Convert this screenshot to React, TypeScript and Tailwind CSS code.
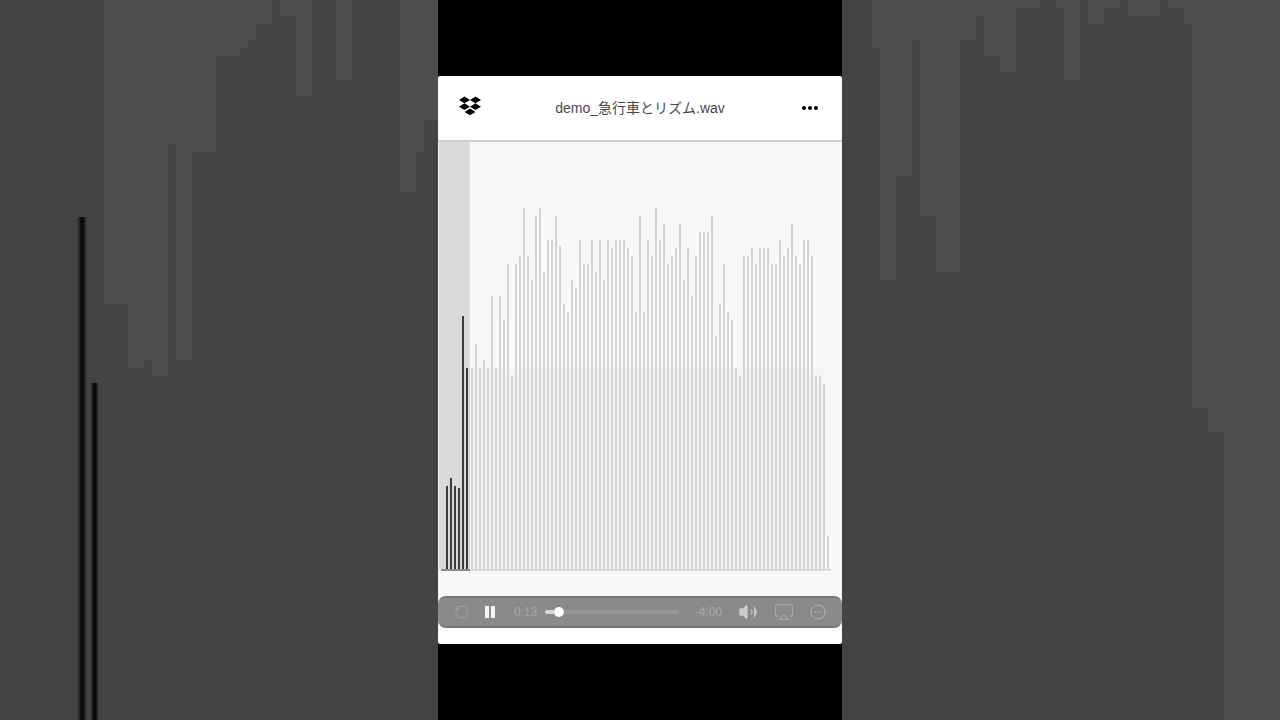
import { useState } from "react"
import { Airplay, RotateCcw, Volume2 } from "lucide-react"

interface Column { x: number; w: number; h: number }

// Enlarged waveform silhouette on both sides of the player
const backdropColumns: Column[] = [
  { x: 104, w: 24, h: 304 }, { x: 128, w: 16, h: 368 }, { x: 144, w: 8, h: 360 }, { x: 152, w: 16, h: 376 },
  { x: 168, w: 8, h: 144 }, { x: 176, w: 16, h: 360 }, { x: 192, w: 24, h: 152 }, { x: 216, w: 24, h: 56 },
  { x: 240, w: 8, h: 48 }, { x: 248, w: 8, h: 40 }, { x: 256, w: 16, h: 24 }, { x: 280, w: 16, h: 16 },
  { x: 296, w: 16, h: 96 }, { x: 336, w: 16, h: 80 }, { x: 400, w: 16, h: 192 }, { x: 416, w: 8, h: 152 },
  { x: 424, w: 14, h: 120 }, { x: 872, w: 8, h: 48 }, { x: 880, w: 16, h: 280 }, { x: 896, w: 16, h: 176 },
  { x: 912, w: 8, h: 40 }, { x: 920, w: 16, h: 216 }, { x: 936, w: 24, h: 272 }, { x: 960, w: 16, h: 40 },
  { x: 976, w: 8, h: 16 }, { x: 984, w: 16, h: 56 }, { x: 1000, w: 16, h: 72 }, { x: 1016, w: 24, h: 8 },
  { x: 1056, w: 8, h: 8 }, { x: 1064, w: 16, h: 80 }, { x: 1088, w: 16, h: 24 }, { x: 1104, w: 16, h: 8 },
  { x: 1128, w: 32, h: 16 }, { x: 1168, w: 16, h: 8 }, { x: 1184, w: 8, h: 24 }, { x: 1192, w: 16, h: 408 },
  { x: 1208, w: 16, h: 432 }, { x: 1224, w: 56, h: 720 },
]

// Bar heights, one bar every 4 units
const playedBars = [84, 92, 84, 82, 254, 202]
const upcomingBars = [
  202, 226, 202, 210, 202, 274, 202, 274, 250, 306, 194, 306, 314, 362, 314, 290, 354, 362, 298, 330,
  330, 354, 324, 266, 258, 290, 282, 330, 306, 306, 330, 298, 330, 290, 330, 322, 330, 330, 330, 322,
  314, 258, 354, 258, 330, 314, 362, 330, 346, 306, 314, 322, 346, 290, 322, 274, 314, 338, 338, 338,
  354, 234, 266, 306, 258, 250, 202, 194, 314, 314, 322, 306, 322, 322, 322, 306, 306, 330, 314, 322,
  346, 314, 306, 330, 330, 314, 194, 194, 186, 34,
]

function Backdrop() {
  return (
    <svg className="absolute inset-0 h-full w-full" viewBox="0 0 1280 720" preserveAspectRatio="none" aria-hidden="true">
      <defs>
        <linearGradient id="line">
          <stop offset="0" stopColor="#444444" />
          <stop offset="0.45" stopColor="#080808" />
          <stop offset="0.6" stopColor="#080808" />
          <stop offset="1" stopColor="#444444" />
        </linearGradient>
      </defs>
      <rect width="1280" height="720" fill="#444444" />
      <g fill="#4e4e4e" shapeRendering="crispEdges">
        {backdropColumns.map((c) => <rect key={c.x} x={c.x} y="0" width={c.w} height={c.h} />)}
      </g>
      <rect x="77" y="217" width="10" height="503" fill="url(#line)" />
      <rect x="90" y="383" width="9" height="337" fill="url(#line)" />
    </svg>
  )
}

function DropboxLogo() {
  return (
    <svg className="h-5 w-[22px]" viewBox="0 0 22 20" fill="currentColor" aria-hidden="true">
      <path d="M5.5 0.5 11 3.9 5.5 7.3 0 3.9zM16.5 0.5 22 3.9 16.5 7.3 11 3.9zM5.5 7.3 11 10.7 5.5 14.1 0 10.7zM16.5 7.3 22 10.7 16.5 14.1 11 10.7zM11 12.5 16.5 15.9 11 19.3 5.5 15.9z" />
    </svg>
  )
}

function Waveform() {
  return (
    <svg className="block h-auto w-full" viewBox="0 0 404 454" role="img" aria-label="Waveform">
      <rect x="1" y="0" width="31" height="428" fill="#dadada" />
      <rect x="33" y="226" width="354" height="202" fill="#f4f4f4" />
      <g fill="#3c3c3c">
        {playedBars.map((h, i) => <rect key={i} x={8 + i * 4} y={428 - h} width="2" height={h} />)}
      </g>
      <g fill="#d4d4d4">
        {upcomingBars.map((h, i) => <rect key={i} x={33 + i * 4} y={428 - h} width="2" height={h} />)}
      </g>
      <rect x="3" y="427" width="29" height="2" fill="#8c8c8c" />
      <rect x="32" y="427" width="361" height="2" fill="#dcdcdc" />
    </svg>
  )
}

export default function App() {
  const [playing, setPlaying] = useState(true)
  const [position, setPosition] = useState(7)

  return (
    <div className="relative min-h-screen bg-[#444444] font-['Liberation_Sans','Noto_Sans_CJK_JP',sans-serif]">
      <Backdrop />
      <main className="relative mx-auto flex min-h-screen w-full max-w-[404px] flex-col justify-center bg-black">
        <div className="overflow-hidden rounded-xs bg-white pb-4">
          {/* File header */}
          <header className="flex h-16 items-center justify-between px-5">
            <a href="#" aria-label="Dropbox" className="flex w-6 justify-center pb-1 text-black"><DropboxLogo /></a>
            <h1 className="text-sm text-[#484848]">demo_急行車とリズム.wav</h1>
            <button type="button" aria-label="More" className="flex w-6 items-center justify-center text-black">
              <svg className="h-1 w-4" viewBox="0 0 16 4" fill="currentColor" aria-hidden="true">
                <circle cx="2" cy="2" r="2" /><circle cx="8" cy="2" r="2" /><circle cx="14" cy="2" r="2" />
              </svg>
            </button>
          </header>

          <section className="border-t-2 border-[#cfcfcf] bg-[#f8f8f8]">
            <Waveform />
          </section>

          {/* Player controls */}
          <div className="flex h-8 items-center rounded-lg border-y-2 border-[#747474] bg-[#8a8a8a] px-4 text-[#b4b4b4]">
            <button type="button" aria-label="Back 15 seconds"><RotateCcw className="size-4" strokeWidth={1} /></button>
            <button type="button" aria-label={playing ? "Pause" : "Play"} onClick={() => setPlaying(!playing)} className="ml-3 text-[#f4f4f4]">
              <svg className="size-4" viewBox="0 0 16 16" fill="currentColor" aria-hidden="true">
                {playing ? <path d="M3 2h4v12H3zM9 2h4v12H9z" /> : <path d="M3 2l11 6-11 6z" />}
              </svg>
            </button>
            <span className="ml-4 text-xs text-[#a4a4a4]">0:13</span>
            <input
              type="range"
              aria-label="Position"
              min={0}
              max={100}
              value={position}
              onChange={(e) => setPosition(Number(e.target.value))}
              className="mr-4 ml-2 h-1 min-w-0 flex-1 appearance-none rounded-full bg-linear-to-r from-[#d8d8d8] from-7% to-[#959595] to-7% [&::-webkit-slider-thumb]:size-2.5 [&::-webkit-slider-thumb]:appearance-none [&::-webkit-slider-thumb]:rounded-full [&::-webkit-slider-thumb]:bg-white"
            />
            <span className="text-xs text-[#a8a8a8]">-4:00</span>
            <button type="button" aria-label="Mute" className="ml-4 text-[#cccccc]"><Volume2 className="size-5" strokeWidth={1} fill="currentColor" /></button>
            <button type="button" aria-label="AirPlay" className="ml-4"><Airplay className="size-5" strokeWidth={1} /></button>
            <button type="button" aria-label="Options" className="ml-4">
              <svg className="size-4" viewBox="0 0 16 16" fill="none" stroke="currentColor" aria-hidden="true">
                <circle cx="8" cy="8" r="7" /><path d="M4 8h2M7 8h2M10 8h2" />
              </svg>
            </button>
          </div>
        </div>
      </main>
    </div>
  )
}
